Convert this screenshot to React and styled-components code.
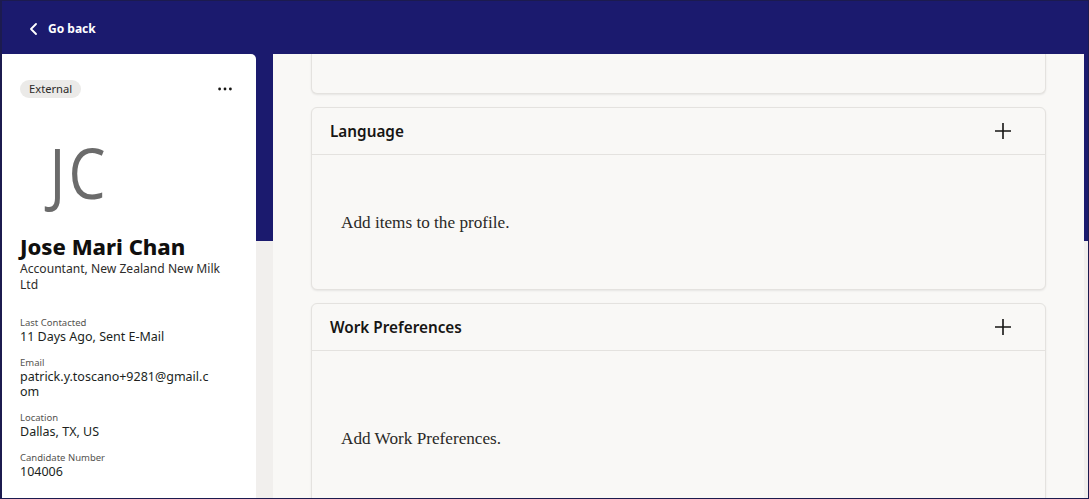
import styled, { createGlobalStyle } from "styled-components";

const GlobalStyle = createGlobalStyle`
  html, body {
    margin: 0;
    padding: 0;
    height: 100%;
    overflow: hidden;
  }
  body {
    font-family: "Noto Sans", "Open Sans", sans-serif;
    color: #161513;
  }
  * {
    box-sizing: border-box;
  }
`;

const profileFields = [
  { label: "Last Contacted", value: "11 Days Ago, Sent E-Mail" },
  { label: "Email", value: "patrick.y.toscano+9281@gmail.com" },
  { label: "Location", value: "Dallas, TX, US" },
  { label: "Candidate Number", value: "104006" },
];

const ChevronLeft = () => (
  <svg width="10" height="12" viewBox="0 0 10 12">
    <polyline
      points="7,1 2,6 7,11"
      fill="none"
      stroke="#fff"
      strokeWidth="1.8"
      strokeLinecap="round"
      strokeLinejoin="round"
    />
  </svg>
);

const Dots = () => (
  <svg width="14" height="4" viewBox="0 0 14 4">
    <circle cx="1.6" cy="2" r="1.4" fill="#161513" />
    <circle cx="7" cy="2" r="1.4" fill="#161513" />
    <circle cx="12.4" cy="2" r="1.4" fill="#161513" />
  </svg>
);

const Plus = () => (
  <svg width="18" height="18" viewBox="0 0 18 18">
    <path d="M9 1v16M1 9h16" stroke="#161513" strokeWidth="1.6" fill="none" />
  </svg>
);

const App = () => {
  return (
    <>
      <GlobalStyle />
      <Frame>
        <Header>
          <BackLink>
            <ChevronLeft />
            Go back
          </BackLink>
        </Header>

        <Body>
          <ProfileCard>
            <CardTop>
              <Pill>External</Pill>
              <MenuButton>
                <Dots />
              </MenuButton>
            </CardTop>

            <Avatar>JC</Avatar>

            <Name>Jose Mari Chan</Name>
            <Subtitle>Accountant, New Zealand New Milk Ltd</Subtitle>

            <Fields>
              {profileFields.map((f) => (
                <Field key={f.label}>
                  <FieldLabel>{f.label}</FieldLabel>
                  <FieldValue>{f.value}</FieldValue>
                </Field>
              ))}
            </Fields>
          </ProfileCard>

          <Main>
            <SectionTail />

            <Section>
              <SectionHeader>
                <SectionTitle>Language</SectionTitle>
                <AddButton>
                  <Plus />
                </AddButton>
              </SectionHeader>
              <SectionBody $top={58} $bottom={56}>
                <EmptyText>Add items to the profile.</EmptyText>
              </SectionBody>
            </Section>

            <Section>
              <SectionHeader>
                <SectionTitle>Work Preferences</SectionTitle>
                <AddButton>
                  <Plus />
                </AddButton>
              </SectionHeader>
              <SectionBody $top={78} $bottom={76}>
                <EmptyText>Add Work Preferences.</EmptyText>
              </SectionBody>
            </Section>
          </Main>
        </Body>
      </Frame>
    </>
  );
};

export default App;

const Frame = styled.div`
  height: 100vh;
  border-style: solid;
  border-color: #1c1b4f;
  border-width: 1px 1px 1px 2px;
  display: flex;
  flex-direction: column;
  overflow: hidden;
  background: #1b1a6e;
`;

const Header = styled.header`
  height: 53px;
  flex-shrink: 0;
  background: #1b1a6e;
  display: flex;
  align-items: center;
  padding: 2px 0 0 27px;
`;

const BackLink = styled.a`
  display: flex;
  align-items: center;
  gap: 9px;
  color: #fff;
  font-size: 12px;
  font-weight: 700;
  cursor: pointer;
`;

const Body = styled.div`
  flex: 1;
  display: flex;
  gap: 17px;
  padding-right: 4px;
  background: linear-gradient(to bottom, #1b1a6e 0, #1b1a6e 187px, #f1efed 187px);
  min-height: 0;
`;

const ProfileCard = styled.aside`
  width: 254px;
  flex-shrink: 0;
  background: #fff;
  border-top-right-radius: 5px;
  padding: 26px 24px 0 18px;
`;

const CardTop = styled.div`
  display: flex;
  justify-content: space-between;
  align-items: center;
`;

const Pill = styled.span`
  background: #ebeae8;
  color: #2c2b29;
  font-size: 11.2px;
  line-height: 18px;
  height: 18px;
  padding: 0 9px;
  border-radius: 9px;
`;

const MenuButton = styled.span`
  display: flex;
`;

const Avatar = styled.div`
  font-family: "Open Sans", "Noto Sans", sans-serif;
  font-weight: 400;
  font-size: 70px;
  line-height: 1;
  color: #6b6b6b;
  padding-left: 35px;
  margin-top: 39px;
  letter-spacing: 4px;
  transform: scaleX(0.84);
  transform-origin: left center;
`;

const Name = styled.h1`
  margin: 25px 0 0;
  font-size: 22px;
  font-weight: 800;
  line-height: 28px;
  color: #100f0e;
`;

const Subtitle = styled.p`
  margin: 0;
  padding-top: 1px;
  font-size: 12.1px;
  line-height: 16px;
  color: #2d2c2a;
  width: 210px;
`;

const Fields = styled.div`
  margin-top: 23px;
  display: flex;
  flex-direction: column;
  gap: 12px;
`;

const Field = styled.div``;

const FieldLabel = styled.div`
  font-size: 9.5px;
  line-height: 13px;
  color: #55534f;
`;

const FieldValue = styled.div`
  font-size: 12.5px;
  line-height: 15px;
  color: #201f1d;
  width: 192px;
  overflow-wrap: anywhere;
`;

const Main = styled.main`
  flex: 1;
  background: #f9f8f6;
  padding: 0 38px;
  display: flex;
  flex-direction: column;
  gap: 13px;
  overflow: hidden;
`;

const SectionTail = styled.div`
  height: 40px;
  flex-shrink: 0;
  background: #f9f8f6;
  border: 1px solid #e4e2df;
  border-top: none;
  border-radius: 0 0 6px 6px;
  box-shadow: 0 1px 2px rgba(0, 0, 0, 0.08);
`;

const Section = styled.section`
  flex-shrink: 0;
  background: #f9f8f6;
  border: 1px solid #e4e2df;
  border-radius: 6px;
  box-shadow: 0 1px 2px rgba(0, 0, 0, 0.08);
`;

const SectionHeader = styled.div`
  height: 47px;
  display: flex;
  align-items: center;
  justify-content: space-between;
  padding: 0 33px 0 18px;
  border-bottom: 1px solid #e4e2df;
`;

const SectionTitle = styled.h2`
  margin: 0;
  font-size: 15.3px;
  font-weight: 600;
  color: #161513;
`;

const AddButton = styled.span`
  display: flex;
`;

const SectionBody = styled.div`
  padding: ${(p) => p.$top}px 30px ${(p) => p.$bottom}px 29px;
`;

const EmptyText = styled.p`
  margin: 0;
  font-family: "Liberation Serif", "Times New Roman", serif;
  font-size: 17.2px;
  line-height: 20px;
  color: #2a2927;
`;
